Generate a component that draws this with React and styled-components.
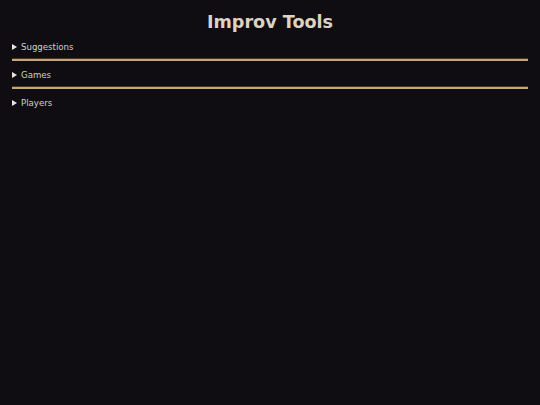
import React from "react";
import styled, { createGlobalStyle } from 'styled-components';

const GlobalStyle = createGlobalStyle`
    html, body {
        margin: 0;
        padding: 0;
        background-color: #0f0d12;
        font-family: "DejaVu Sans", Verdana, sans-serif;
        color: #d8d2c8;
    }
`

const Page = styled.main`
    min-height: 405px;
    box-sizing: border-box;
    padding: 12px 12px;
`

const Title = styled.h1`
    margin: 0 0 10px;
    text-align: center;
    font-size: 17.6px;
    line-height: 20px;
    font-weight: bold;
    color: #ddd3c3;
`

const Section = styled.details`
    font-size: 8.6px;
`

const Summary = styled.summary`
    cursor: pointer;
    list-style: none;
    display: flex;
    align-items: center;
    gap: 4px;
    line-height: 11px;
    color: #d4cfc8;

    &::-webkit-details-marker {
        display: none;
    }

    &::before {
        content: "";
        transform: translateY(-1px);
        border-left: 5px solid #e8e4dc;
        border-top: 3px solid transparent;
        border-bottom: 3px solid transparent;
    }
`

const Rule = styled.hr`
    margin: 5px 0 9px;
    height: 2px;
    border: none;
    border-top: 1px solid #4a3520;
    background-color: #c6a676;
`

const sections = ["Suggestions", "Games", "Players"];

function App() {
    return (
        <>
            <GlobalStyle />
            <Page>
                <Title>Improv Tools</Title>
                {sections.map((name, i) => (
                    <React.Fragment key={name}>
                        <Section>
                            <Summary>{name}</Summary>
                        </Section>
                        {i < sections.length - 1 && <Rule />}
                    </React.Fragment>
                ))}
            </Page>
        </>
    )
}

export default App;
